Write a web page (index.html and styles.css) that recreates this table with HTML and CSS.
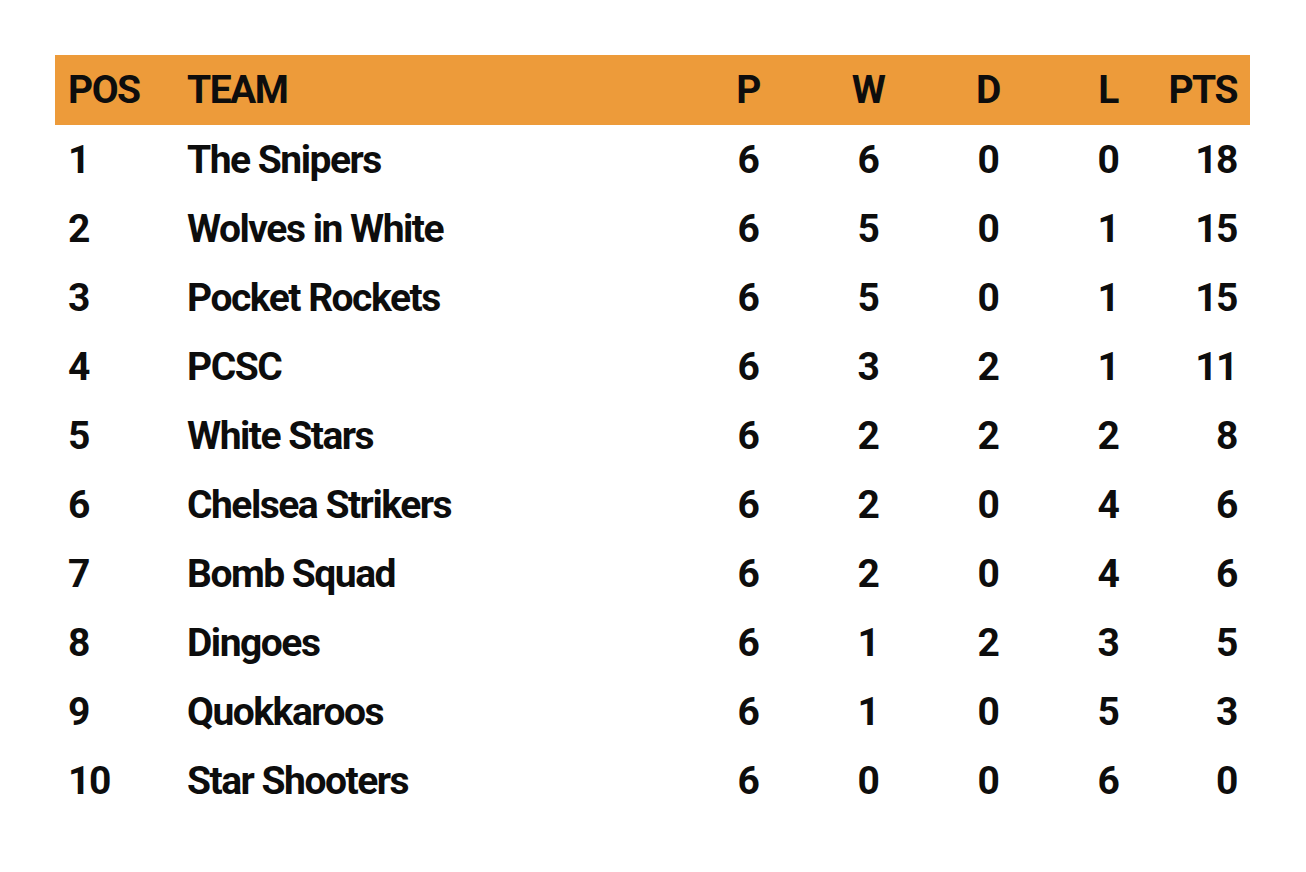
FILE: index.html
```html
<!DOCTYPE html>
<html>
<head>
<meta charset="utf-8">
<link rel="stylesheet" href="styles.css">
</head>
<body>
<div class="league">
  <div class="row head">
    <div class="pos">POS</div><div class="team">TEAM</div><div class="num">P</div><div class="num">W</div><div class="num">D</div><div class="num">L</div><div class="pts">PTS</div>
  </div>
  <div class="row"><div class="pos">1</div><div class="team">The Snipers</div><div class="num">6</div><div class="num">6</div><div class="num">0</div><div class="num">0</div><div class="pts">18</div></div>
  <div class="row"><div class="pos">2</div><div class="team">Wolves in White</div><div class="num">6</div><div class="num">5</div><div class="num">0</div><div class="num">1</div><div class="pts">15</div></div>
  <div class="row"><div class="pos">3</div><div class="team">Pocket Rockets</div><div class="num">6</div><div class="num">5</div><div class="num">0</div><div class="num">1</div><div class="pts">15</div></div>
  <div class="row"><div class="pos">4</div><div class="team">PCSC</div><div class="num">6</div><div class="num">3</div><div class="num">2</div><div class="num">1</div><div class="pts">11</div></div>
  <div class="row"><div class="pos">5</div><div class="team">White Stars</div><div class="num">6</div><div class="num">2</div><div class="num">2</div><div class="num">2</div><div class="pts">8</div></div>
  <div class="row"><div class="pos">6</div><div class="team">Chelsea Strikers</div><div class="num">6</div><div class="num">2</div><div class="num">0</div><div class="num">4</div><div class="pts">6</div></div>
  <div class="row"><div class="pos">7</div><div class="team">Bomb Squad</div><div class="num">6</div><div class="num">2</div><div class="num">0</div><div class="num">4</div><div class="pts">6</div></div>
  <div class="row"><div class="pos">8</div><div class="team">Dingoes</div><div class="num">6</div><div class="num">1</div><div class="num">2</div><div class="num">3</div><div class="pts">5</div></div>
  <div class="row"><div class="pos">9</div><div class="team">Quokkaroos</div><div class="num">6</div><div class="num">1</div><div class="num">0</div><div class="num">5</div><div class="pts">3</div></div>
  <div class="row"><div class="pos">10</div><div class="team">Star Shooters</div><div class="num">6</div><div class="num">0</div><div class="num">0</div><div class="num">6</div><div class="pts">0</div></div>
</div>
</body>
</html>
```

FILE: styles.css
```css
html, body {
  margin: 0;
  padding: 0;
  background: #ffffff;
}
body {
  padding: 55px 56px 0 55px;
  font-family: Roboto, "DejaVu Sans Condensed", sans-serif;
  font-weight: 700;
  color: #0d0d0d;
}
.league {
  width: 1195px;
}
.row {
  box-sizing: border-box;
  display: grid;
  grid-template-columns: 132px 501px 120px 120px 120px 120px 82px;
  height: 69px;
  padding-top: 2px;
  align-items: center;
  font-size: 39px;
  line-height: 1;
  letter-spacing: -1.5px;
}
.row.head {
  height: 70px;
  padding-top: 1px;
  background: #ed9b3a;
}
.pos {
  padding-left: 13px;
}
.num {
  text-align: center;
}
.pts {
  text-align: right;
  padding-right: 13px;
}
```
